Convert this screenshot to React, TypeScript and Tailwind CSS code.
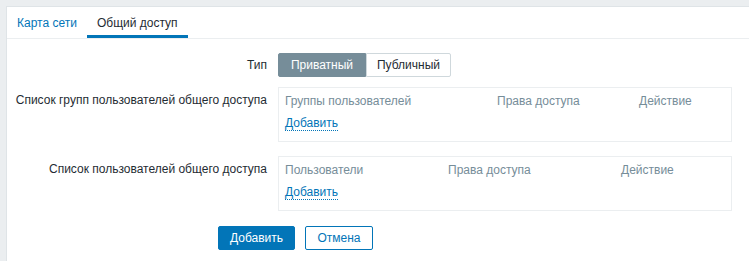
import React from "react";

const font = { fontFamily: '"Liberation Sans", Arial, sans-serif' };

function AddLink() {
  return (
    <span className="cursor-pointer border-b border-dotted border-[#0275b8] text-[#0275b8] leading-[14px]">
      Добавить
    </span>
  );
}

function ShareTable({ cols, widths }: { cols: string[]; widths: string[] }) {
  return (
    <div className="h-[55px] w-[454px] border border-[#ebeef0] px-[6px] pt-[6px]">
      <div className="flex h-[14px] leading-[14px] text-[#768d99]">
        {cols.map((c, i) => (
          <div key={c} className={widths[i]}>
            {c}
          </div>
        ))}
      </div>
      <div className="mt-[6px]">
        <AddLink />
      </div>
    </div>
  );
}

export default function App() {
  return (
    <div className="h-[261px] overflow-hidden bg-[#ebeef0] pl-[6px] pt-[6px] text-[12px] text-[#1f2c33]" style={font}>
      <div className="h-full border-l border-t border-[#dfe4e7] bg-white">
        <div className="flex h-[32px] border-b border-[#ebeef0]">
          <div className="px-[10px] pt-[9px] leading-[14px] text-[#0275b8]">Карта сети</div>
          <div className="border-b-[3px] border-[#0275b8] px-[10px] pt-[9px] leading-[14px]">Общий доступ</div>
        </div>

        <div className="pt-[14px]">
          <div className="flex items-center">
            <div className="w-[261px] pr-px text-right leading-[14px]">Тип</div>
            <div className="ml-[10px] flex">
              <button className="h-[24px] w-[88px] rounded-l-[2px] border border-[#768d99] bg-[#768d99] text-white">Приватный</button>
              <button className="h-[24px] w-[85px] rounded-r-[2px] border border-[#cfd8dc] bg-white text-[#1f2c33]">Публичный</button>
            </div>
          </div>

          <div className="mt-[10px] flex">
            <div className="w-[261px] pr-px pt-[6px] text-right leading-[14px]">Список групп пользователей общего доступа</div>
            <div className="ml-[10px]">
              <ShareTable cols={["Группы пользователей", "Права доступа", "Действие"]} widths={["w-[212px]", "w-[142px]", "flex-1"]} />
            </div>
          </div>

          <div className="mt-[14px] flex">
            <div className="w-[261px] pr-px pt-[6px] text-right leading-[14px]">Список пользователей общего доступа</div>
            <div className="ml-[10px]">
              <ShareTable cols={["Пользователи", "Права доступа", "Действие"]} widths={["w-[163px]", "w-[173px]", "flex-1"]} />
            </div>
          </div>

          <div className="ml-[211px] mt-[15px] flex gap-[10px]">
            <button className="h-[24px] w-[77px] rounded-[2px] border border-[#0275b8] bg-[#0275b8] text-white">Добавить</button>
            <button className="h-[24px] w-[68px] rounded-[2px] border border-[#0275b8] bg-white text-[#0275b8]">Отмена</button>
          </div>
        </div>
      </div>
    </div>
  );
}
